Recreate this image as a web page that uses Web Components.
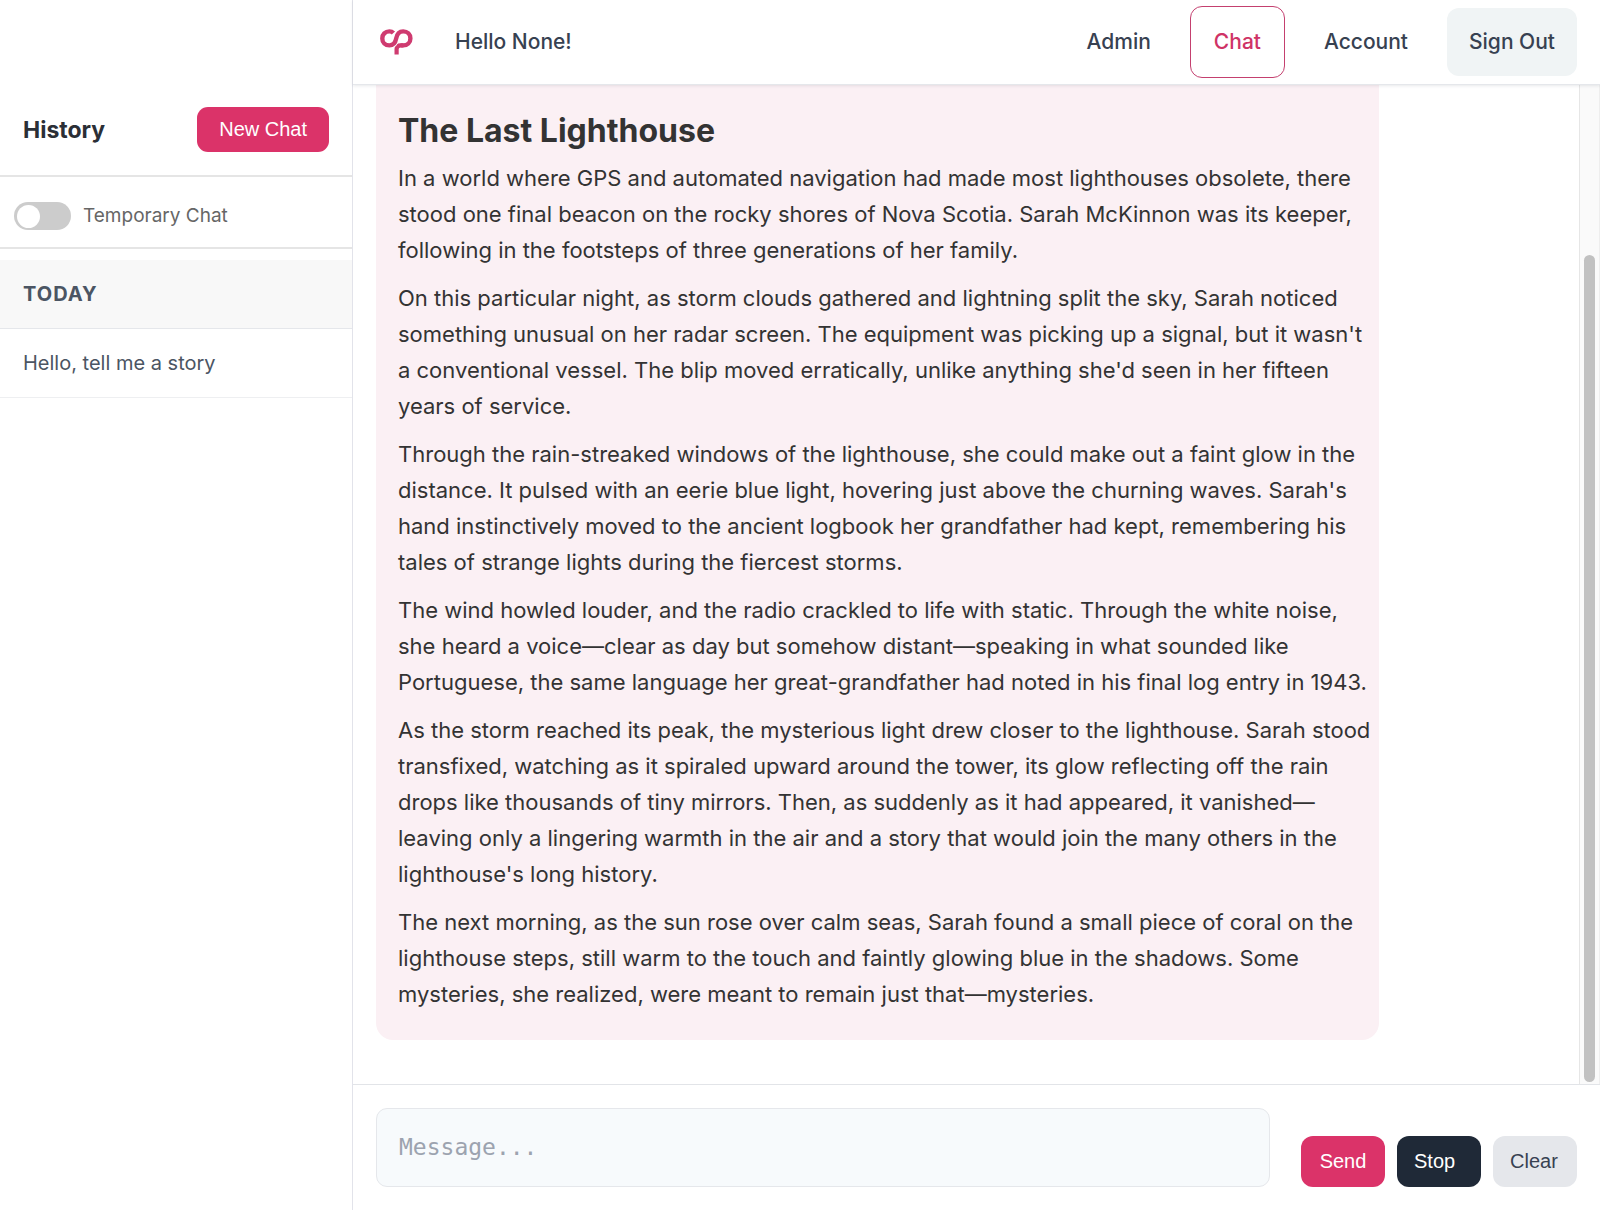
<!DOCTYPE html>
<html lang="en">
<head>
<meta charset="utf-8">
<title>Chat</title>
<style>
  html, body { height: 100%; margin: 0; }
  body {
    font-family: Inter, "Liberation Sans", sans-serif;
    color: #333;
    background: #fff;
    --brand: #db3369;
    --line: #e5e7eb;
    --slate: #374151;
  }
</style>
</head>
<body>
<chat-app>
  <chat-sidebar slot="sidebar">
    <history-group label="Today">
      <history-item>Hello, tell me a story</history-item>
    </history-group>
  </chat-sidebar>
  <top-bar slot="header" greeting="Hello None!">
    <nav-link>Admin</nav-link>
    <nav-link variant="active">Chat</nav-link>
    <nav-link>Account</nav-link>
    <nav-link variant="filled">Sign Out</nav-link>
  </top-bar>
  <message-list slot="messages">
    <chat-message>
      <h2>The Last Lighthouse</h2>
      <p>In a world where GPS and automated navigation had made most lighthouses obsolete, there<br>stood one final beacon on the rocky shores of Nova Scotia. Sarah McKinnon was its keeper,<br>following in the footsteps of three generations of her family.</p>
      <p>On this particular night, as storm clouds gathered and lightning split the sky, Sarah noticed<br>something unusual on her radar screen. The equipment was picking up a signal, but it wasn't<br>a conventional vessel. The blip moved erratically, unlike anything she'd seen in her fifteen<br>years of service.</p>
      <p>Through the rain-streaked windows of the lighthouse, she could make out a faint glow in the<br>distance. It pulsed with an eerie blue light, hovering just above the churning waves. Sarah's<br>hand instinctively moved to the ancient logbook her grandfather had kept, remembering his<br>tales of strange lights during the fiercest storms.</p>
      <p>The wind howled louder, and the radio crackled to life with static. Through the white noise,<br>she heard a voice—clear as day but somehow distant—speaking in what sounded like<br>Portuguese, the same language her great-grandfather had noted in his final log entry in 1943.</p>
      <p>As the storm reached its peak, the mysterious light drew closer to the lighthouse. Sarah stood<br>transfixed, watching as it spiraled upward around the tower, its glow reflecting off the rain<br>drops like thousands of tiny mirrors. Then, as suddenly as it had appeared, it vanished—<br>leaving only a lingering warmth in the air and a story that would join the many others in the<br>lighthouse's long history.</p>
      <p>The next morning, as the sun rose over calm seas, Sarah found a small piece of coral on the<br>lighthouse steps, still warm to the touch and faintly glowing blue in the shadows. Some<br>mysteries, she realized, were meant to remain just that—mysteries.</p>
    </chat-message>
  </message-list>
  <message-composer slot="composer"></message-composer>
</chat-app>

<script>
  function define(name, html, setup) {
    const template = document.createElement('template');
    template.innerHTML = '<style>*{box-sizing:border-box}:host{box-sizing:border-box}</style>' + html;
    customElements.define(name, class extends HTMLElement {
      constructor() {
        super();
        this.attachShadow({ mode: 'open' }).append(template.content.cloneNode(true));
      }
      connectedCallback() {
        if (setup) setup(this, this.shadowRoot);
      }
    });
  }

  define('chat-app', `
    <style>
      :host { display: flex; height: 100vh; overflow: hidden; }
      aside { box-sizing: content-box; flex: 0 0 22%; border-right: 1px solid #e2e3ea; }
      .main { flex: 1; min-width: 0; display: flex; flex-direction: column; }
      main { flex: 1; min-height: 0; display: flex; }
      ::slotted([slot=messages]) { flex: 1; min-width: 0; }
    </style>
    <aside><slot name="sidebar"></slot></aside>
    <div class="main">
      <slot name="header"></slot>
      <main><slot name="messages"></slot></main>
      <slot name="composer"></slot>
    </div>`);

  define('chat-sidebar', `
    <style>
      :host { display: block; padding-top: 84px; }
      header { display: flex; align-items: center; justify-content: space-between; height: 93px; padding: 0 23px; border-bottom: 2px solid #e5e5e5; }
      h1 { margin: 0; font-size: 23px; line-height: 32px; font-weight: 700; color: #2b2f36; }
      button { height: 45px; padding: 0 22px; border: 0; border-radius: 11px; background: var(--brand); color: #fff; font: 20px "Liberation Sans", sans-serif; }
      .temp { display: flex; align-items: center; height: 72px; padding: 8px 14px 0; gap: 12px; border-bottom: 2px solid #e5e5e5; font-size: 19px; line-height: 28px; color: #666; }
      input { appearance: none; display: flex; align-items: center; width: 57px; height: 28px; margin: 0; padding: 3px; border-radius: 14px; background: #ccc; }
      input::before { content: ""; width: 23px; height: 23px; border-radius: 50%; background: #fff; }
      input:checked { background: var(--brand); justify-content: flex-end; }
      nav { padding-top: 11px; }
    </style>
    <header><h1>History</h1><button type="button">New Chat</button></header>
    <div class="temp"><input type="checkbox" id="temp" role="switch"><label for="temp">Temporary Chat</label></div>
    <nav><slot></slot></nav>`);

  define('history-group', `
    <style>
      :host { display: block; }
      h2 { margin: 0; padding: 20px 23px; border-bottom: 1px solid var(--line); background: #f8f8f8; font-size: 20px; line-height: 28px; font-weight: 700; letter-spacing: 1px; text-transform: uppercase; color: #4b5563; }
    </style>
    <h2></h2><slot></slot>`,
    (host, root) => { root.querySelector('h2').textContent = host.getAttribute('label'); });

  define('history-item', `
    <style>
      :host { display: block; }
      a { display: block; padding: 20px 23px; border-bottom: 1px solid #eeeff1; font-size: 20px; line-height: 28px; color: #4b5563; text-decoration: none; }
    </style>
    <a href="#"><slot></slot></a>`);

  define('top-bar', `
    <style>
      :host { display: flex; align-items: center; justify-content: space-between; height: 85px; padding: 0 23px 0 27px; border-bottom: 1px solid var(--line); background: #fff; box-shadow: 0 1px 3px #1f29371a; position: relative; }
      .brand { display: flex; align-items: center; gap: 42px; font-size: 21px; line-height: 32px; font-weight: 500; color: var(--slate); }
      svg { display: block; }
      nav { display: flex; align-items: center; gap: 17px; }
    </style>
    <div class="brand">
      <svg width="33" height="26" viewBox="0 0 33 26" fill="none" stroke="#cf3b70" stroke-width="4.4" role="img" aria-label="Logo">
        <path d="M23.4 16.3H20.6C18 16.3 16.6 17.4 16.6 20V25.5" stroke-width="4.2"/>
        <path d="M9.4 16.4C13.5 16.4 15.4 13.8 16.2 9.4C17 5 19.1 2.4 23.2 2.4" stroke="#fff" stroke-width="6.2"/>
        <path d="M13.4 4C12.4 2.9 11.2 2.4 9.4 2.4C5.2 2.4 2.3 5.3 2.3 9.4S5.2 16.4 9.4 16.4C13.5 16.4 15.4 13.8 16.2 9.4C17 5 19.1 2.4 23.2 2.4C27.4 2.4 30.4 5.3 30.4 9.4S27.4 16.4 23.2 16.4H20.6"/>
      </svg>
      <span></span>
    </div>
    <nav><slot></slot></nav>`,
    (host, root) => { root.querySelector('span').textContent = host.getAttribute('greeting'); });

  define('nav-link', `
    <style>
      :host { display: block; }
      a { display: block; padding: 18px 22px; border-radius: 12px; font-size: 21px; line-height: 32px; font-weight: 500; color: var(--slate); text-decoration: none; white-space: nowrap; }
      :host([variant=active]) a { padding: 19px 23px; border: 1px solid #c4406f; color: #cf3366; }
      :host([variant=filled]) a { background: #f0f4f5; }
    </style>
    <a href="#"><slot></slot></a>`);

  define('message-list', `
    <style>
      :host { display: flex; overflow: hidden; }
      .messages { flex: 1; min-width: 0; display: flex; flex-direction: column; justify-content: flex-end; padding: 0 23px 44px; }
      .track { flex: 0 0 21px; border-left: 1px solid #e6e6e6; border-right: 1px solid #eee; background: #fafafa; display: flex; flex-direction: column; justify-content: flex-end; align-items: center; padding-bottom: 2px; }
      .thumb { width: 11px; height: 83%; border-radius: 6px; background: #c1c1c1; }
    </style>
    <div class="messages"><slot></slot></div>
    <div class="track"><div class="thumb"></div></div>`);

  define('chat-message', `
    <style>
      :host { display: block; flex: none; width: 85%; padding: 28px 4px 28px 22px; border-radius: 0 0 17px 17px; background: #fbf0f4; font-size: 22px; line-height: 36px; }
      ::slotted(h2) { margin: 0 0 8px !important; font-size: 32px !important; line-height: 42px; font-weight: 700 !important; }
      ::slotted(p) { margin: 0 0 12px !important; }
      ::slotted(p:last-child) { margin: 0 !important; }
    </style>
    <slot></slot>`);

  define('message-composer', `
    <style>
      :host { display: block; border-top: 1px solid #e2e4e8; background: #fff; }
      form { display: flex; align-items: flex-end; gap: 31px; padding: 23px; }
      textarea { display: block; flex: 1; min-width: 0; height: 79px; padding: 20px 22px; border: 1px solid var(--line); border-radius: 11px; background: #f7fafc; resize: none; color: #333; font: 23px/36px "DejaVu Sans Mono", monospace; }
      textarea::placeholder { color: #9ca3af; }
      .actions { display: flex; gap: 12px; }
      button { width: 84px; height: 51px; border: 0; padding: 0 17px; border-radius: 12px; font: 20px "Liberation Sans", sans-serif; text-align: left; }
      .send { background: var(--brand); color: #fff; text-align: center; }
      .stop { background: #1f2937; color: #fff; }
      .clear { background: #e5e7eb; color: var(--slate); }
    </style>
    <form>
      <textarea aria-label="Message" placeholder="Message..." rows="1"></textarea>
      <div class="actions">
        <button type="button" class="send">Send</button>
        <button type="button" class="stop">Stop</button>
        <button type="button" class="clear">Clear</button>
      </div>
    </form>`);
</script>
</body>
</html>
